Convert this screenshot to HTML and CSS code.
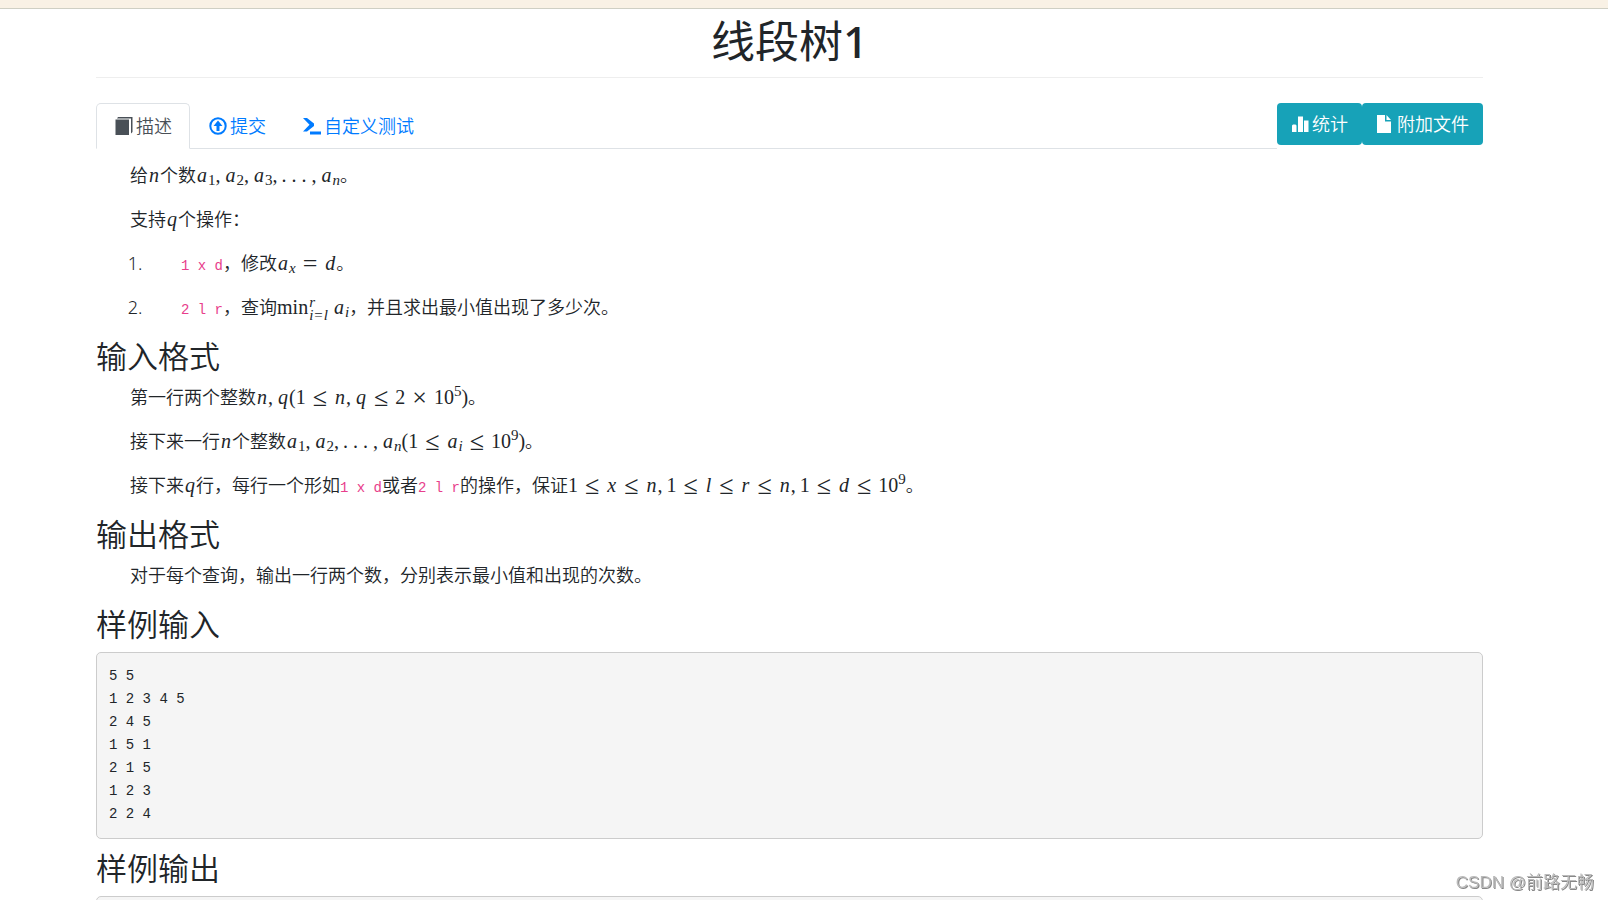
FILE: index.html
```html
<!DOCTYPE html>
<html lang="zh-CN">
<head>
<meta charset="utf-8">
<meta name="viewport" content="width=device-width, initial-scale=1">
<title>线段树1</title>
<link rel="stylesheet" href="styles.css">
</head>
<body>
<div class="topbar"></div>
<main class="container">
  <h1 class="title">线段树<b>1</b></h1>
  <div class="toolbar">
    <nav class="tabs">
      <a class="tab active" href="#description">
        <svg class="icon" viewBox="0 0 18 18" fill="currentColor"><path d="M3 0H17.500v15l-1.500 1.500V1.500H2zM.5 2.500H14V18H.5z"/></svg>描述</a>
      <a class="tab" href="#submit">
        <svg class="icon" viewBox="0 0 18 18"><circle cx="9" cy="9" r="7.700" fill="none" stroke="currentColor" stroke-width="2"/><path fill="currentColor" d="M9 3.500 13.500 9h-3v5h-3V9h-3z"/></svg>提交</a>
      <a class="tab" href="#custom-test">
        <svg class="icon" viewBox="0 0 18 18"><path fill="currentColor" d="M0 1h4L11 6.500v2.500L4 14.500H0L6.500 7.800zM7 14.500h11v3H7z"/></svg>自定义测试</a>
    </nav>
    <div class="actions">
      <a class="btn" href="#statistics"><svg class="icon" viewBox="0 0 18 18" fill="currentColor"><path d="M1 10.500 2 9.500h2.500l1 1V17H1zM7 1.500h5V17H7zM13 5.500h4.500V17H13z"/></svg>统计</a>
      <a class="btn" href="#files"><svg class="icon" viewBox="0 0 18 18" fill="currentColor"><path d="M1 0h8v6.500h6V18H1zM10.500 0 15 5h-4.500z"/></svg>附加文件</a>
    </div>
  </div>

  <article>
    <section>
      <p>给<span class="math"><i>n</i></span>个数<span class="math"><i>a</i><sub>1</sub><span class="sep">,</span><i>a</i><sub>2</sub><span class="sep">,</span><i>a</i><sub>3</sub><span class="sep">,</span><span class="dot">.</span><span class="dot">.</span><span class="dot">.</span><span class="sep">,</span><i>a</i><sub><i>n</i></sub></span>。</p>
      <p>支持<span class="math"><i>q</i></span>个操作：</p>
      <ol>
        <li><code>1 x d</code>，修改<span class="math"><i>a</i><sub><i>x</i></sub><span class="rel">=</span><i>d</i></span>。</li>
        <li><code>2 l r</code>，查询<span class="math">min<span class="limits"><i>r</i><span><i>i</i>=<i>l</i></span></span><i>a</i><sub><i>i</i></sub></span>，并且求出最小值出现了多少次。</li>
      </ol>
    </section>
    <section>
      <h2>输入格式</h2>
      <p>第一行两个整数<span class="math"><i>n</i><span class="sep">,</span><i>q</i>(1<span class="rel">≤</span><i>n</i><span class="sep">,</span><i>q</i><span class="rel">≤</span>2<span class="rel">×</span>10<sup>5</sup>)</span>。</p>
      <p>接下来一行<span class="math"><i>n</i></span>个整数<span class="math"><i>a</i><sub>1</sub><span class="sep">,</span><i>a</i><sub>2</sub><span class="sep">,</span><span class="dot">.</span><span class="dot">.</span><span class="dot">.</span><span class="sep">,</span><i>a</i><sub><i>n</i></sub>(1<span class="rel">≤</span><i>a</i><sub><i>i</i></sub><span class="rel">≤</span>10<sup>9</sup>)</span>。</p>
      <p>接下来<span class="math"><i>q</i></span>行，每行一个形如<code>1 x d</code>或者<code>2 l r</code>的操作，保证<span class="math">1<span class="rel">≤</span><i>x</i><span class="rel">≤</span><i>n</i><span class="sep">,</span>1<span class="rel">≤</span><i>l</i><span class="rel">≤</span><i>r</i><span class="rel">≤</span><i>n</i><span class="sep">,</span>1<span class="rel">≤</span><i>d</i><span class="rel">≤</span>10<sup>9</sup></span>。</p>
    </section>
    <section>
      <h2>输出格式</h2>
      <p>对于每个查询，输出一行两个数，分别表示最小值和出现的次数。</p>
    </section>
    <section>
      <h2>样例输入</h2>
      <pre>5 5
1 2 3 4 5
2 4 5
1 5 1
2 1 5
1 2 3
2 2 4</pre>
    </section>
    <section>
      <h2>样例输出</h2>
      <pre></pre>
    </section>
  </article>
</main>
<div class="watermark">CSDN @前路无畅</div>
</body>
</html>
```
FILE: styles.css
```css
* { box-sizing: border-box; }

body {
  margin: 0;
  height: 100vh;
  overflow: hidden;
  background: #fff;
  color: #212529;
  font-family: "Noto Sans", "Noto Sans CJK SC", sans-serif;
  font-size: 18px;
  font-weight: 350;
  line-height: 27px;
}

.topbar {
  height: 9px;
  background: #f9f1e5;
  border-bottom: 1px solid #cfcfc4;
}

.container { padding: 0 125px 0 96px; }

.title {
  margin: 0 0 25px;
  padding: 6px 0 9px;
  border-bottom: 1px solid #eee;
  font-size: 44px;
  font-weight: 400;
  line-height: 53px;
  text-align: center;
}
.title b { font-weight: 500; }

.toolbar {
  display: flex;
  align-items: flex-start;
  margin-bottom: 13px;
  line-height: 26px;
}

.tabs {
  display: flex;
  flex: 1;
  border-bottom: 1px solid #dee2e6;
}

.tab {
  display: flex;
  align-items: center;
  gap: 3px;
  margin-bottom: -1px;
  padding: 9px 17px 9px 18px;
  border: 1px solid transparent;
  border-radius: 5px 5px 0 0;
  color: #007bff;
  text-decoration: none;
}
.tab.active {
  color: #495057;
  background: #fff;
  border-color: #dee2e6 #dee2e6 #fff;
}

.icon { width: 18px; height: 18px; flex: none; }

.actions { display: flex; }

.btn {
  display: flex;
  align-items: center;
  gap: 3px;
  padding: 8px 14px;
  border-radius: 4px;
  background: #17a2b8;
  color: #fff;
  text-decoration: none;
}

p {
  margin: 0 0 17px;
  padding-left: 34px;
}

ol { margin: 0; padding-left: 51px; }
li { margin-bottom: 17px; text-indent: 34px; }

h2 {
  margin: 0 0 9px;
  font-size: 31px;
  font-weight: 350;
  line-height: 37px;
}

code, pre { font-family: "Liberation Mono", monospace; font-size: 14px; }
code { color: #e83e8c; line-height: 1; }

pre {
  margin: 0 0 11px;
  padding: 12px;
  min-height: 48px;
  border: 1px solid #ccc;
  border-radius: 5px;
  background: #f5f5f5;
  line-height: 23px;
}

.math {
  font-family: "Liberation Serif", serif;
  font-size: 20px;
  font-weight: 400;
  line-height: 1;
  text-indent: 0;
}
.math i { margin: 0 1px; }
.math sub, .math sup { font-size: 15px; line-height: 0; }
.math sub { vertical-align: -3px; }
.math sub i { margin: 0; }
.math sup { vertical-align: 8px; }
.sep { margin-right: 4px; }
.dot { margin-right: 5px; }
.rel { margin: 0 7px; font-size: 26px; line-height: 0; vertical-align: -2px; }

.limits {
  display: inline-flex;
  flex-direction: column;
  height: 26px;
  margin: -6px 4px -6px 0;
  font-size: 15px;
  line-height: 13px;
  vertical-align: middle;
}

.watermark {
  position: fixed;
  right: 14px;
  bottom: 4px;
  color: #bbb;
  font-family: "Liberation Sans", "Noto Sans CJK SC", sans-serif;
  font-size: 17px;
  text-shadow: 1px 1px 0 #888;
}
```
